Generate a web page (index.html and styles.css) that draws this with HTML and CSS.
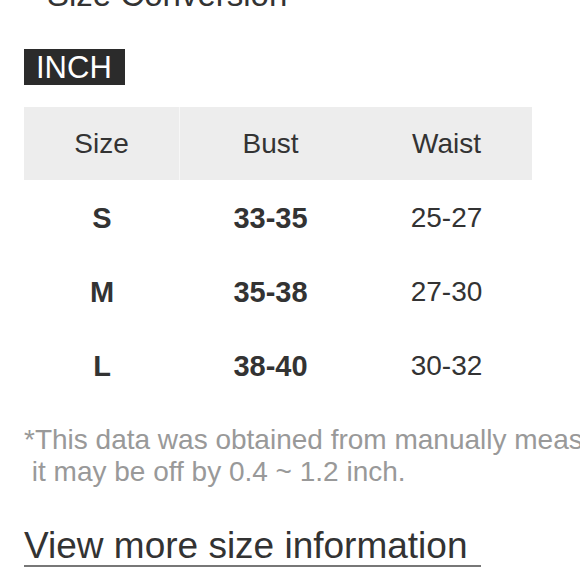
FILE: index.html
```html
<!DOCTYPE html>
<html>
<head>
<meta charset="utf-8">
<link rel="stylesheet" href="styles.css">
</head>
<body>
<div class="page">
  <div class="title">Size Conversion</div>
  <div class="unit"><span class="unit-tag">INCH</span></div>
  <div class="table">
    <div class="cell head first">Size</div>
    <div class="cell head">Bust</div>
    <div class="cell head">Waist</div>
    <div class="cell bold">S</div>
    <div class="cell bold">33-35</div>
    <div class="cell">25-27</div>
    <div class="cell bold">M</div>
    <div class="cell bold">35-38</div>
    <div class="cell">27-30</div>
    <div class="cell bold">L</div>
    <div class="cell bold">38-40</div>
    <div class="cell">30-32</div>
  </div>
  <div class="note">
    <div class="note-line">*This data was obtained from manually measuring the product,</div>
    <div class="note-line">&nbsp;it may be off by 0.4 ~ 1.2 inch.</div>
  </div>
  <div class="more"><a class="more-link">View more size information</a></div>
</div>
</body>
</html>
```
FILE: styles.css
```css
html, body {
  margin: 0;
  padding: 0;
  background: #ffffff;
  overflow: hidden;
}
.page {
  width: 580px;
  height: 580px;
  overflow: hidden;
  padding-left: 24px;
  box-sizing: border-box;
  font-family: "Liberation Sans", Arial, sans-serif;
  color: #333333;
}
.title {
  font-size: 33px;
  line-height: 34px;
  margin-top: -22px;
  margin-left: 23px;
  color: #333333;
  white-space: nowrap;
}
.unit {
  margin-top: 37px;
  height: 36px;
}
.unit-tag {
  display: inline-block;
  background: #2b2b2b;
  color: #ffffff;
  font-size: 31px;
  height: 36px;
  line-height: 37px;
  padding: 0 13px 0 12px;
}
.table {
  margin-top: 22px;
  width: 508px;
  display: grid;
  grid-template-columns: 156px 181px 171px;
  grid-auto-rows: 74px;
}
.cell {
  display: flex;
  align-items: center;
  justify-content: center;
  font-size: 28px;
  color: #333333;
}
.cell.head {
  background: #ededed;
  height: 73px;
  align-self: start;
}
.cell.head.first {
  border-right: 1px solid #f7f7f7;
}
.cell.bold {
  font-weight: bold;
  font-size: 29px;
}
.note {
  margin-top: 21px;
  font-size: 28px;
  line-height: 32px;
  color: #999999;
  white-space: nowrap;
}
.more {
  margin-top: 39px;
}
.more-link {
  display: inline-block;
  font-size: 37px;
  line-height: 38px;
  color: #333333;
  padding-right: 13px;
  border-bottom: 2px solid #777777;
}
```
